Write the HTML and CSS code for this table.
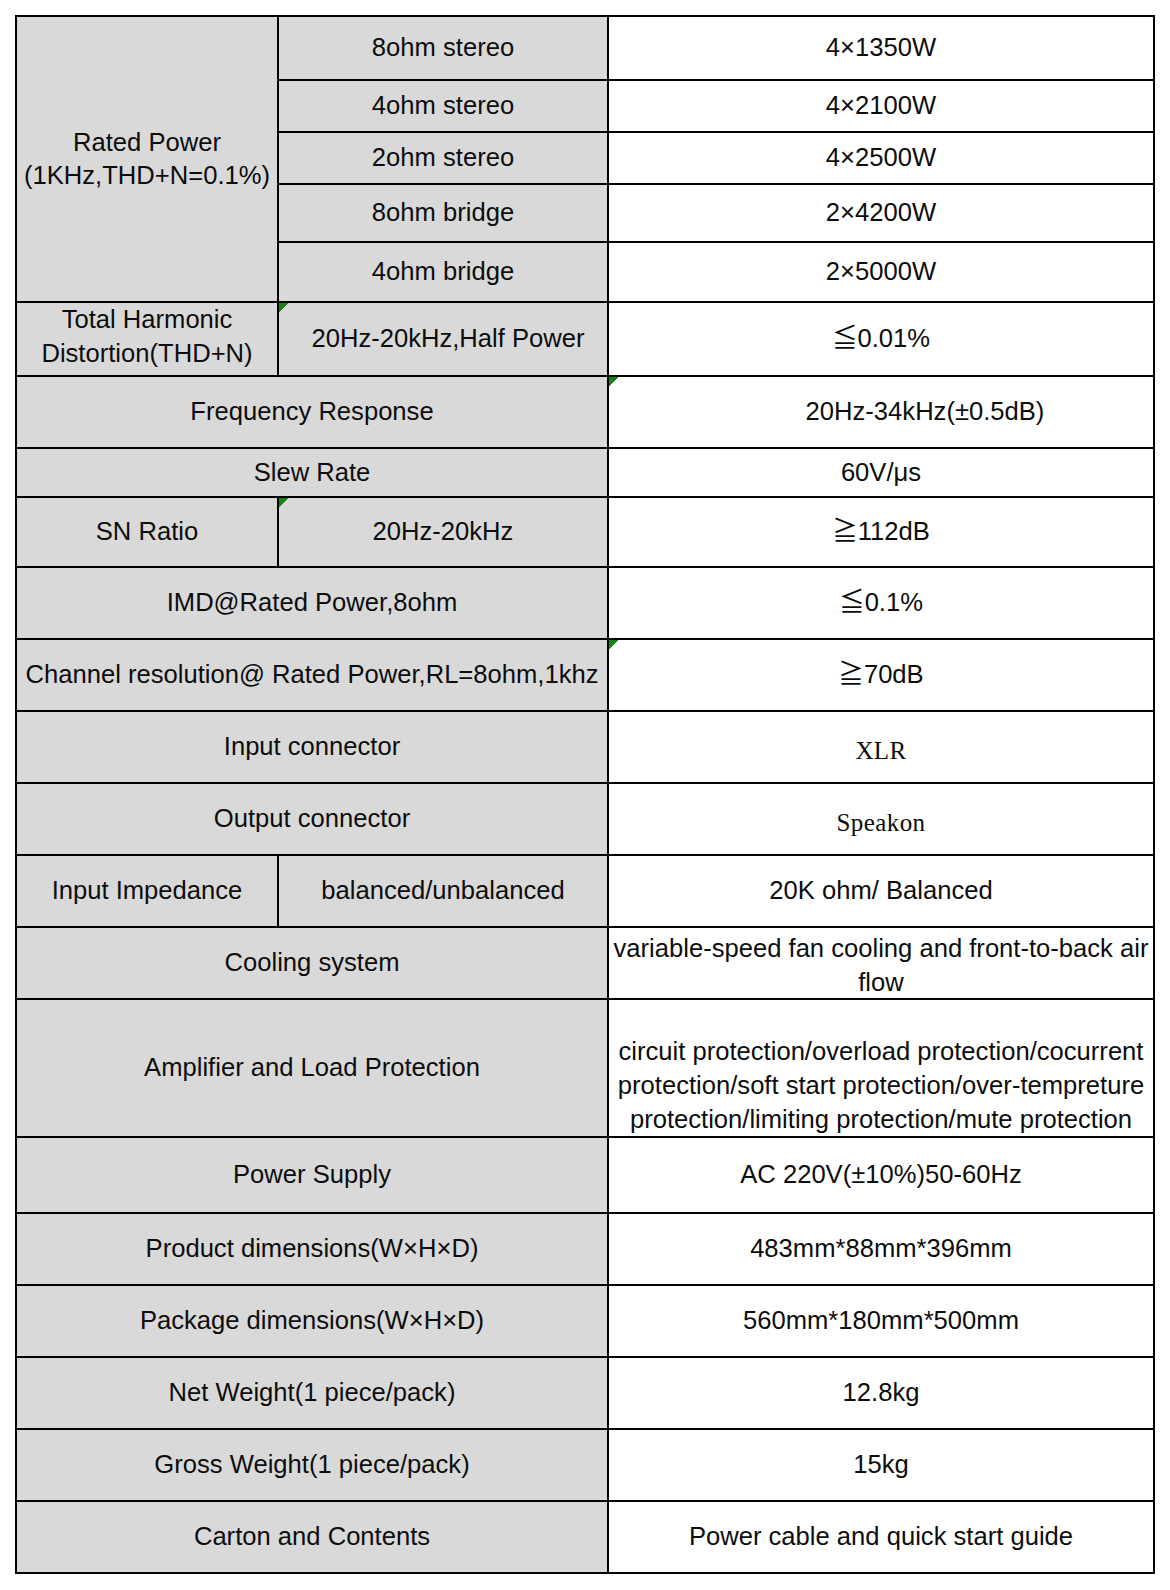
FILE: index.html
```html
<!DOCTYPE html>
<html lang="en">
<head>
<meta charset="utf-8">
<title>Specifications</title>
<link rel="stylesheet" href="styles.css">
</head>
<body>
<div class="page">
  <div class="spec">
    <div class="cell label rated">Rated Power<br>(1KHz,THD+N=0.1%)</div>
    <div class="cell label">8ohm stereo</div>
    <div class="cell value">4×1350W</div>
    <div class="cell label">4ohm stereo</div>
    <div class="cell value">4×2100W</div>
    <div class="cell label">2ohm stereo</div>
    <div class="cell value">4×2500W</div>
    <div class="cell label">8ohm bridge</div>
    <div class="cell value">2×4200W</div>
    <div class="cell label">4ohm bridge</div>
    <div class="cell value">2×5000W</div>

    <div class="cell label raised">Total Harmonic<br>Distortion(THD+N)</div>
    <div class="cell label flag nudge">20Hz-20kHz,Half Power</div>
    <div class="cell value">≦0.01%</div>

    <div class="cell label wide">Frequency Response</div>
    <div class="cell value flag indent">20Hz-34kHz(±0.5dB)</div>

    <div class="cell label wide">Slew Rate</div>
    <div class="cell value">60V/μs</div>

    <div class="cell label">SN Ratio</div>
    <div class="cell label flag">20Hz-20kHz</div>
    <div class="cell value">≧112dB</div>

    <div class="cell label wide">IMD@Rated Power,8ohm</div>
    <div class="cell value">≦0.1%</div>

    <div class="cell label wide">Channel resolution@ Rated Power,RL=8ohm,1khz</div>
    <div class="cell value flag">≧70dB</div>

    <div class="cell label wide">Input connector</div>
    <div class="cell value serif">XLR</div>

    <div class="cell label wide">Output connector</div>
    <div class="cell value serif">Speakon</div>

    <div class="cell label">Input Impedance</div>
    <div class="cell label">balanced/unbalanced</div>
    <div class="cell value">20K ohm/ Balanced</div>

    <div class="cell label wide">Cooling system</div>
    <div class="cell value lower">variable-speed fan cooling and front-to-back air flow</div>

    <div class="cell label wide">Amplifier and Load Protection</div>
    <div class="cell value bottom">circuit protection/overload protection/cocurrent<br>protection/soft start protection/over-tempreture<br>protection/limiting protection/mute protection</div>

    <div class="cell label wide">Power Supply</div>
    <div class="cell value">AC 220V(±10%)50-60Hz</div>

    <div class="cell label wide">Product dimensions(W×H×D)</div>
    <div class="cell value">483mm*88mm*396mm</div>

    <div class="cell label wide">Package dimensions(W×H×D)</div>
    <div class="cell value">560mm*180mm*500mm</div>

    <div class="cell label wide">Net Weight(1 piece/pack)</div>
    <div class="cell value">12.8kg</div>

    <div class="cell label wide">Gross Weight(1 piece/pack)</div>
    <div class="cell value">15kg</div>

    <div class="cell label wide">Carton and Contents</div>
    <div class="cell value">Power cable and quick start guide</div>
  </div>
</div>
</body>
</html>
```

FILE: styles.css
```css
html, body {
  margin: 0;
  padding: 0;
  background: #ffffff;
}

.page {
  padding: 15px;
}

.spec {
  display: grid;
  width: max-content;
  grid-template-columns: 260px 328px 544px;
  grid-template-rows: 62px 50px 50px 56px 58px 72px 70px 47px 68px 70px 70px 70px 70px 70px 70px 136px 74px 70px 70px 70px 70px 70px;
  gap: 2px;
  padding: 2px;
  background: #000000;
  font-family: "Liberation Sans", Arial, "Noto Sans CJK SC", sans-serif;
  font-size: 25.6px;
  line-height: 33.5px;
  color: #0d0d0d;
}

.cell {
  display: flex;
  align-items: center;
  justify-content: center;
  text-align: center;
  padding: 0 2px;
}

.label {
  background: #d9d9d9;
}

.value {
  background: #ffffff;
}

.rated {
  grid-row: span 5;
}

.wide {
  grid-column: span 2;
}

.raised {
  padding-bottom: 5px;
}

.nudge {
  padding-left: 12px;
}

.indent {
  padding-left: 90px;
}

.bottom {
  align-items: flex-end;
  line-height: 34px;
  padding-bottom: 0;
}

.lower {
  padding-top: 5px;
}

.serif {
  font-family: "Liberation Serif", "Times New Roman", serif;
  font-size: 25px;
  letter-spacing: 0.4px;
  padding-top: 7px;
}

.flag {
  background-image: linear-gradient(135deg, #138513 0 7px, transparent 7px);
}
```
